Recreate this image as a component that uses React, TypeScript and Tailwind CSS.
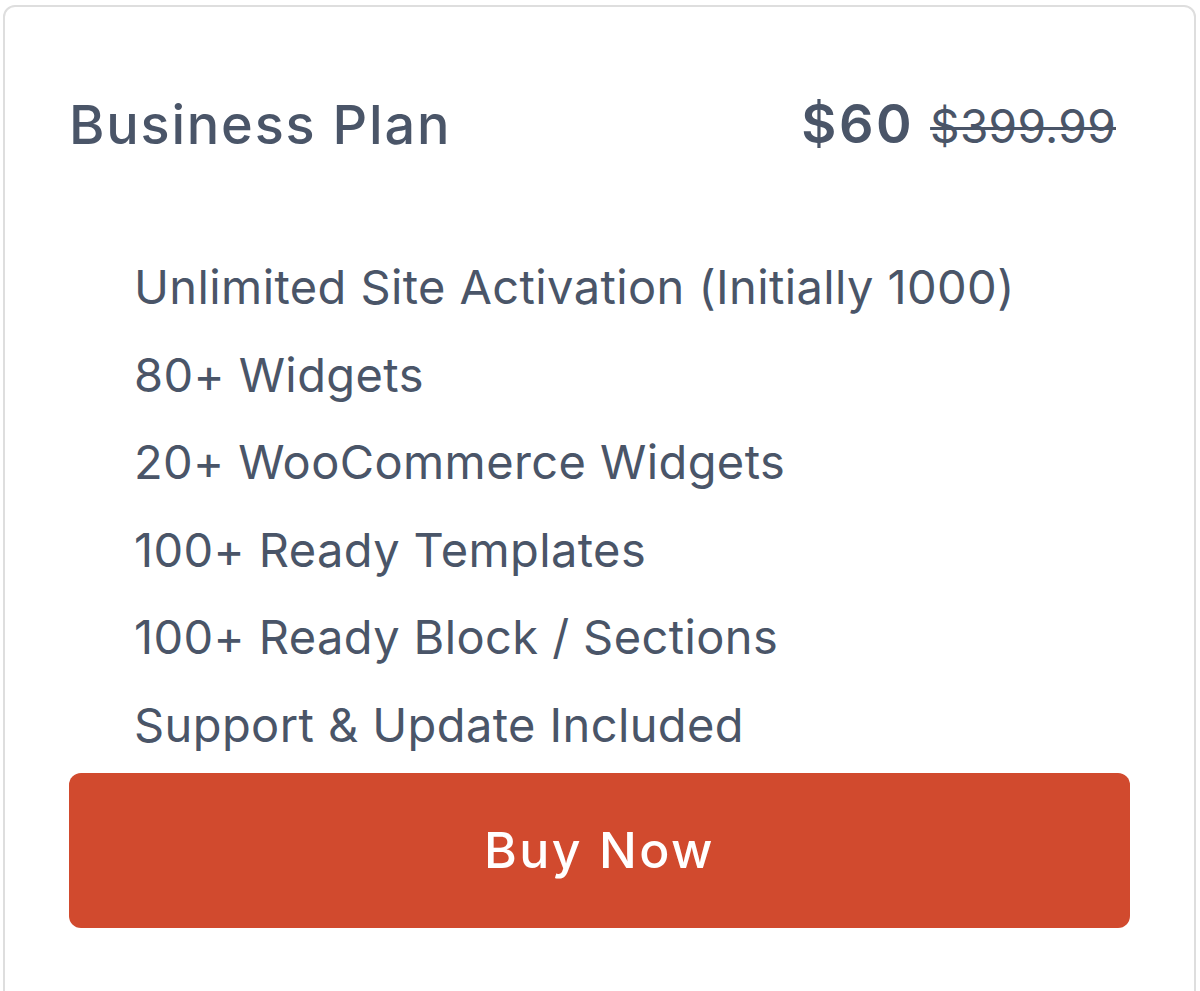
import React from 'react';

const features = [
  'Unlimited Site Activation (Initially 1000)',
  '80+ Widgets',
  '20+ WooCommerce Widgets',
  '100+ Ready Templates',
  '100+ Ready Block / Sections',
  'Support & Update Included',
];

export default function App() {
  return (
    <div className="h-[991px] overflow-hidden bg-white pl-[3px] pr-[4px] pt-[5px] font-['Inter',sans-serif] text-[#4a5568]">
      <div className="h-[1000px] rounded-t-xl border-2 border-[#dedede] px-[64px] pt-[88px]">
        <div className="flex h-[60px] items-center justify-between pr-[14px]">
          <h2 className="text-[54px] font-medium leading-[60px] tracking-[1.8px]">Business Plan</h2>
          <div className="flex items-baseline gap-[16px]">
            <span className="text-[54px] font-semibold leading-[60px] tracking-[2.5px]">$60</span>
            <span className="text-[46px] leading-[60px] tracking-[0.3px] line-through decoration-[3px]">$399.99</span>
          </div>
        </div>
        <ul className="mt-[88px] pl-[65px]">
          {features.map((f) => (
            <li key={f} className="text-[47px] leading-[87.5px] tracking-[0.4px]">
              {f}
            </li>
          ))}
        </ul>
        <button className="mt-[5px] flex h-[155px] w-full items-center justify-center rounded-xl bg-[#d14a2e] text-[50px] font-medium tracking-[2.5px] text-white">
          Buy Now
        </button>
      </div>
    </div>
  );
}
